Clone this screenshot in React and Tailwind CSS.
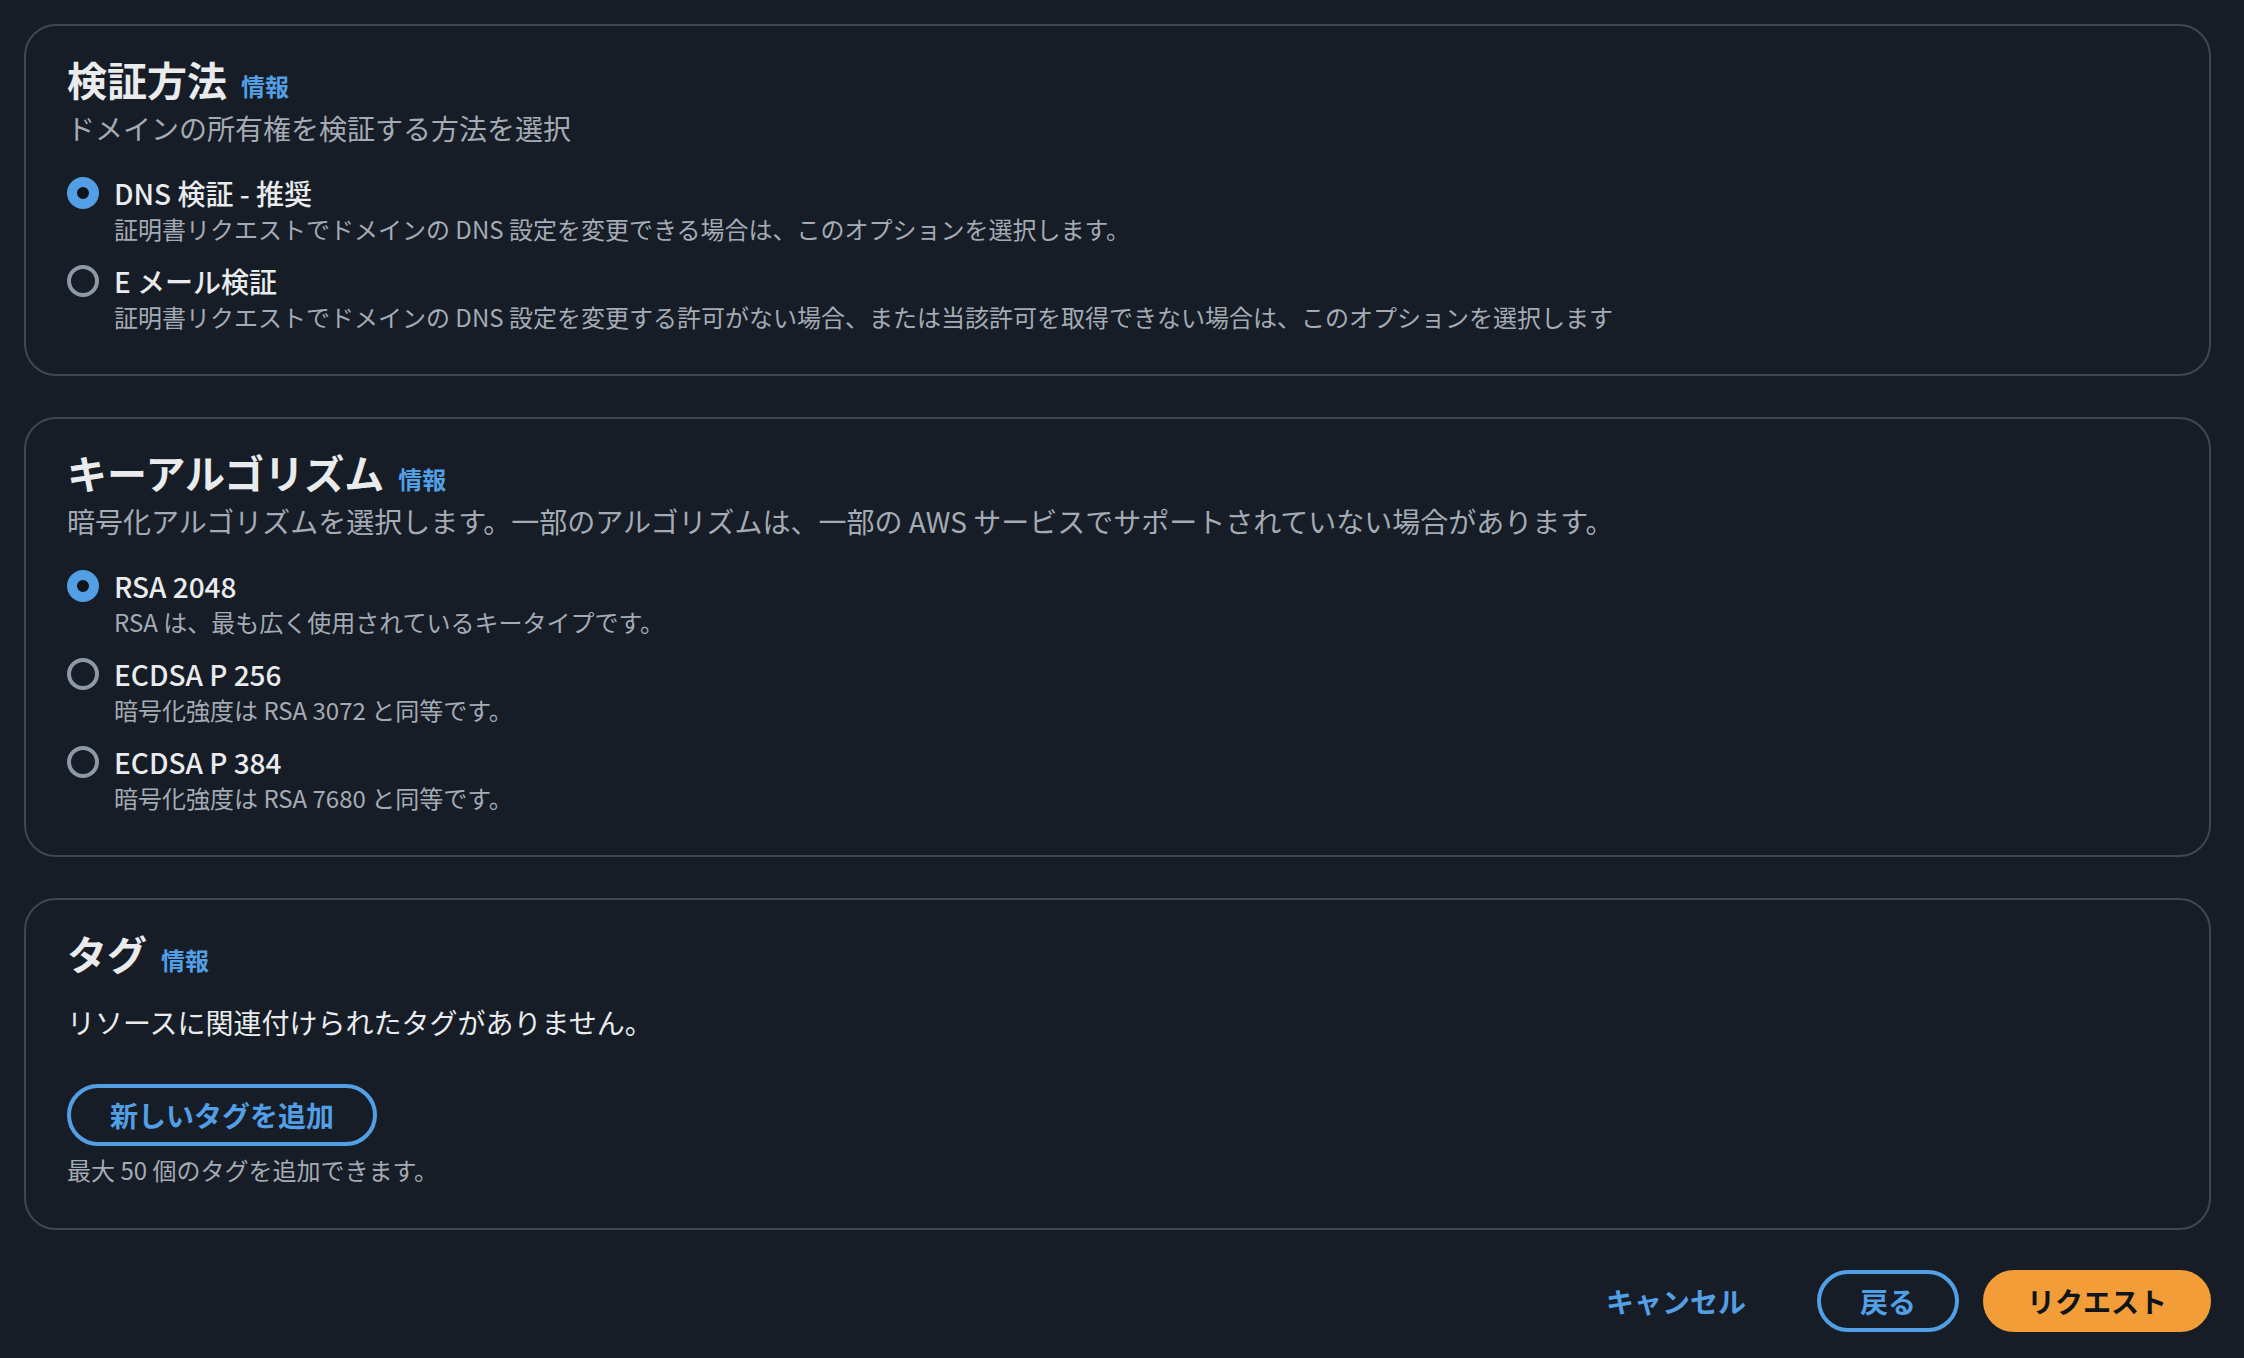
import React, { useState } from 'react';

const font = { fontFamily: '"Noto Sans CJK JP", "Noto Sans", sans-serif' };

const Radio = ({ checked }) => (
  <span
    className={`mt-[4px] box-border block h-[32px] w-[32px] shrink-0 rounded-full ${
      checked ? 'border-[10px] border-[#539fe5] bg-[#0f141a]' : 'border-[4px] border-[#8d99a8] bg-transparent'
    }`}
  />
);

const RadioGroup = ({ options, value, onChange }) => (
  <div className="mt-[25px] flex flex-col gap-[16px]">
    {options.map((o) => (
      <label key={o.value} className="flex cursor-pointer items-start gap-[15px]" onClick={() => onChange(o.value)}>
        <Radio checked={value === o.value} />
        <div className="flex flex-col">
          <span className="text-[28px] font-medium leading-[40px] text-[#e9ebed]">{o.label}</span>
          <span className="text-[24px] leading-[32px] text-[#a4abb4]">{o.desc}</span>
        </div>
      </label>
    ))}
  </div>
);

const Header = ({ title, desc }) => (
  <div>
    <div className="flex items-baseline gap-[14px]">
      <h2 className="text-[40px] font-bold leading-[48px] text-[#e9ebed]">{title}</h2>
      <a className="text-[24px] font-bold leading-[32px] text-[#539fe5]">情報</a>
    </div>
    {desc && <p className="mt-[5px] text-[28px] leading-[40px] text-[#a4abb4]">{desc}</p>}
  </div>
);

// cards share the same frame; bottom padding differs slightly per section
const Card = ({ children, last }) => (
  <section
    className={`rounded-[32px] border-2 border-[#414750] px-[41px] pt-[29px] ${last ? 'pb-[42px]' : 'pb-[41px]'}`}
  >
    {children}
  </section>
);

export default function App() {
  const [method, setMethod] = useState('dns');
  const [algo, setAlgo] = useState('rsa');

  return (
    <div style={font} className="min-h-screen bg-[#161d26] pl-[24px] pr-[33px] pt-[24px] pb-[27px]">
      <div className="flex flex-col gap-[41px]">
        <Card>
          <Header title="検証方法" desc="ドメインの所有権を検証する方法を選択" />
          <RadioGroup
            value={method}
            onChange={setMethod}
            options={[
              {
                value: 'dns',
                label: 'DNS 検証 - 推奨',
                desc: '証明書リクエストでドメインの DNS 設定を変更できる場合は、このオプションを選択します。',
              },
              {
                value: 'email',
                label: 'E メール検証',
                desc: '証明書リクエストでドメインの DNS 設定を変更する許可がない場合、または当該許可を取得できない場合は、このオプションを選択します',
              },
            ]}
          />
        </Card>

        <Card>
          <Header
            title="キーアルゴリズム"
            desc="暗号化アルゴリズムを選択します。一部のアルゴリズムは、一部の AWS サービスでサポートされていない場合があります。"
          />
          <RadioGroup
            value={algo}
            onChange={setAlgo}
            options={[
              { value: 'rsa', label: 'RSA 2048', desc: 'RSA は、最も広く使用されているキータイプです。' },
              { value: 'p256', label: 'ECDSA P 256', desc: '暗号化強度は RSA 3072 と同等です。' },
              { value: 'p384', label: 'ECDSA P 384', desc: '暗号化強度は RSA 7680 と同等です。' },
            ]}
          />
        </Card>

        <Card last>
          <Header title="タグ" />
          <p className="mt-[25px] text-[28px] leading-[40px] text-[#e9ebed]">リソースに関連付けられたタグがありません。</p>
          <button className="mt-[42px] h-[62px] rounded-full border-[4px] border-[#539fe5] px-[39px] text-[28px] font-bold leading-[40px] text-[#539fe5]">
            新しいタグを追加
          </button>
          <p className="mt-[8px] text-[24px] leading-[32px] text-[#a4abb4]">最大 50 個のタグを追加できます。</p>
        </Card>
      </div>

      <div className="mt-[40px] flex items-center justify-end gap-[24px]">
        <button className="h-[62px] rounded-full border-[4px] border-transparent px-[43px] text-[28px] font-bold text-[#539fe5]">
          キャンセル
        </button>
        <button className="h-[62px] rounded-full border-[4px] border-[#539fe5] px-[39px] text-[28px] font-bold text-[#539fe5]">
          戻る
        </button>
        <button className="h-[62px] rounded-full border-[4px] border-[#f29d38] bg-[#f29d38] px-[40px] text-[28px] font-bold text-[#0f141a]">
          リクエスト
        </button>
      </div>
    </div>
  );
}
